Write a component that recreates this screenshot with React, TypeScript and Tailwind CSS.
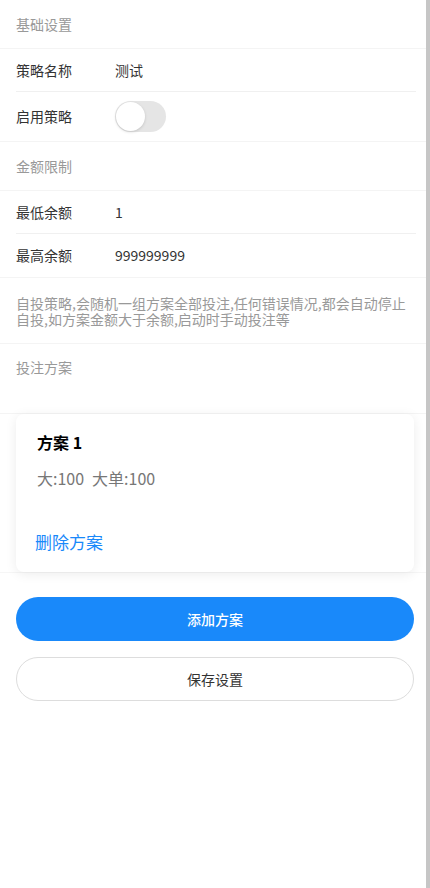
import React, { useState } from 'react';

const SectionTitle: React.FC<{ title: string }> = ({ title }) => (
  <div className="flex h-[49px] items-center border-b border-[#f4f4f4] px-4 text-[14px] text-[#999999]">
    {title}
  </div>
);

const Row: React.FC<{ label: string; divider?: boolean; children: React.ReactNode; tall?: boolean }> = ({
  label,
  divider,
  children,
  tall,
}) => (
  <div className="pl-4 pr-[10px]">
    <div
      className={`flex items-center ${tall ? 'h-[49px]' : 'h-[43px]'} ${
        divider ? 'border-b border-[#f0f0f0]' : ''
      }`}
    >
      <div className="w-[99px] shrink-0 text-[14px] text-[#333333]">{label}</div>
      <div className="flex-1 text-[14px] text-[#333333]">{children}</div>
    </div>
  </div>
);

const Toggle: React.FC<{ on: boolean; onChange: () => void }> = ({ on, onChange }) => (
  <button
    onClick={onChange}
    className={`flex h-[31px] w-[51px] items-center rounded-full p-[1px] ${
      on ? 'justify-end bg-[#1989fa]' : 'justify-start bg-[#e5e5e5]'
    }`}
  >
    <span className="h-[29px] w-[29px] rounded-full bg-white shadow-[0_1px_3px_rgba(0,0,0,0.15)]" />
  </button>
);

export default function App() {
  const [enabled, setEnabled] = useState(false);

  return (
    <div
      className="flex min-h-[888px] bg-white"
      style={{ fontFamily: '"Noto Sans CJK SC", "Noto Sans", sans-serif' }}
    >
      <div className="flex-1">
        <SectionTitle title="基础设置" />
        <Row label="策略名称" divider>
          测试
        </Row>
        <div className="border-b border-[#f4f4f4]">
          <Row label="启用策略" tall>
            <Toggle on={enabled} onChange={() => setEnabled(!enabled)} />
          </Row>
        </div>

        <SectionTitle title="金额限制" />
        <Row label="最低余额" divider>
          1
        </Row>
        <div className="border-b border-[#f4f4f4]">
          <Row label="最高余额">999999999</Row>
        </div>

        <div className="border-b border-[#f4f4f4] px-4 pt-[17px] pb-[16px] text-[14px] leading-[16px] text-[#999999]">
          自投策略,会随机一组方案全部投注,任何错误情况,都会自动停止自投,如方案金额大于余额,启动时手动投注等
        </div>

        <div className="h-[70px] border-b border-[#f4f4f4] px-4 pt-[13px] text-[14px] leading-[20px] text-[#999999]">
          投注方案
        </div>

        <div className="border-b border-[#f6f6f6] pl-4 pr-3">
          <div className="flex h-[158px] flex-col rounded-lg bg-white px-[21px] pt-[17px] shadow-[0_2px_12px_rgba(0,0,0,0.08)]">
            <div className="text-[16px] font-bold leading-[22px] text-black">方案 1</div>
            <div className="mt-[14px] flex text-[16px] leading-[22px] text-[#777777]">
              <span>大:100</span>
              <span className="ml-2">大单:100</span>
            </div>
            <div className="mt-[41px] -ml-[2px] text-[17px] leading-[24px] text-[#1989fa]">删除方案</div>
          </div>
        </div>

        <div className="flex flex-col gap-4 pl-4 pr-3 pt-[24px]">
          <button className="flex h-[44px] items-center justify-center rounded-full bg-[#1989fa] text-[14px] font-medium text-white">
            添加方案
          </button>
          <button className="flex h-[44px] items-center justify-center rounded-full border border-[#dddddd] bg-white text-[14px] text-[#333333]">
            保存设置
          </button>
        </div>
      </div>
      <div className="w-[4px] shrink-0 bg-[#c6c6c6]" />
    </div>
  );
}
